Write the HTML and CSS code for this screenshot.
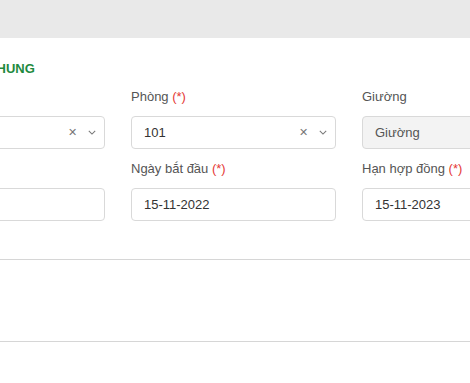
FILE: index.html
```html
<!DOCTYPE html>
<html lang="vi">
<head>
    <meta charset="UTF-8">
    <meta name="viewport" content="width=device-width, initial-scale=1.0">
    <title>Hợp đồng</title>
    <link rel="stylesheet" href="styles.css">
</head>
<body>
    <div class="topbar"></div>

    <div class="content">
        <!-- Thông tin chung -->
        <h3 class="section-title">THÔNG TIN CHUNG</h3>

        <div class="form-grid">
            <div class="field">
                <label>Tòa nhà <span class="req">(*)</span></label>
                <div class="select">
                    <span class="value">Tòa A</span>
                    <span class="clear">&#x2715;</span>
                    <svg class="arrow" viewBox="0 0 10 6" width="8" height="5"><path d="M1 1l4 4 4-4" fill="none" stroke="#777" stroke-width="1.3"/></svg>
                </div>
            </div>
            <div class="field">
                <label>Phòng <span class="req">(*)</span></label>
                <div class="select">
                    <span class="value">101</span>
                    <span class="clear">&#x2715;</span>
                    <svg class="arrow" viewBox="0 0 10 6" width="8" height="5"><path d="M1 1l4 4 4-4" fill="none" stroke="#777" stroke-width="1.3"/></svg>
                </div>
            </div>
            <div class="field">
                <label>Giường</label>
                <input type="text" class="input disabled" value="Giường" disabled>
            </div>

            <div class="field">
                <label>Ngày ký <span class="req">(*)</span></label>
                <input type="text" class="input" value="15-11-2022">
            </div>
            <div class="field">
                <label>Ngày bắt đầu <span class="req">(*)</span></label>
                <input type="text" class="input" value="15-11-2022">
            </div>
            <div class="field">
                <label>Hạn hợp đồng <span class="req">(*)</span></label>
                <input type="text" class="input" value="15-11-2023">
            </div>
        </div>
    </div>

    <!-- Khách thuê -->
    <div class="section-block"></div>
</body>
</html>
```

FILE: styles.css
```css
body {
    margin: 0;
    font-family: "Liberation Sans", Arial, sans-serif;
    font-size: 13px;
    color: #333;
    background-color: #fff;
    overflow: hidden;
}
.topbar {
    height: 38px;
    background-color: #e9e9e9;
}
.content {
    margin-left: -100px;
    width: 667px;
}
.section-title {
    margin: 21px 0 8px 12px;
    font-size: 13px;
    line-height: 20px;
    font-weight: bold;
    color: #1e8a3e;
}
.form-grid {
    display: grid;
    grid-template-columns: 205px 205px 205px;
    column-gap: 26px;
    row-gap: 10px;
}
.field label {
    display: block;
    line-height: 20px;
    margin-bottom: 9px;
    color: #555;
}
.req {
    color: #e53935;
}
.select, .input {
    box-sizing: border-box;
    width: 205px;
    height: 33px;
    border: 1px solid #d9d9d9;
    border-radius: 4px;
    background-color: #fff;
}
.select {
    display: flex;
    align-items: center;
    padding: 0 8px 0 12px;
}
.select .value {
    flex: 1;
}
.clear {
    font-size: 11px;
    color: #777;
    margin-right: 11px;
}
.input {
    display: block;
    padding: 0 12px;
    font-family: "Liberation Sans", Arial, sans-serif;
    font-size: 13px;
    color: #333;
    outline: none;
}
.input.disabled {
    background-color: #f3f3f3;
    color: #555;
}
.section-block {
    margin-top: 38px;
    height: 81px;
    border-top: 1px solid #d6d6d6;
    border-bottom: 1px solid #d6d6d6;
}
```
